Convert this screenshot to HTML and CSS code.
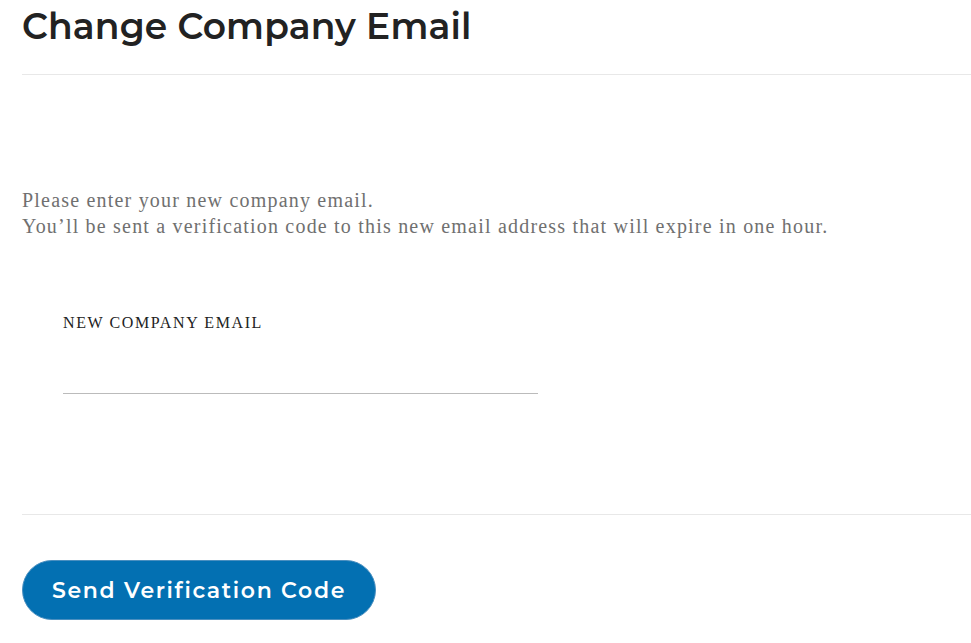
FILE: index.html
```html
<!DOCTYPE html>
<html lang="en">
<head>
<meta charset="UTF-8" />
<meta name="viewport" content="width=device-width, initial-scale=1" />
<title>Change Company Email</title>
<link rel="stylesheet" href="styles.css">
</head>
<body>
  <div class="page">
    <h1 class="title">Change Company Email</h1>

    <div class="body">
      <p class="intro">
        Please enter your new company email.<br>
        You’ll be sent a verification code to this new email address that will expire in one hour.
      </p>

      <form class="email-form" id="emailForm">
        <label class="field-label" for="newEmail">NEW COMPANY EMAIL</label>
        <input class="field-input" type="email" id="newEmail" name="newEmail" />
      </form>
    </div>

    <div class="actions">
      <button class="send-btn" type="submit" form="emailForm">Send Verification Code</button>
    </div>
  </div>
</body>
</html>
```

FILE: styles.css
```css
body, html {
  margin: 0; padding: 0;
  background: #fff;
  overflow: hidden;
}

.page {
  padding-left: 22px;
  width: 949px;
}

.title {
  margin: 0;
  padding: 4px 0 0;
  height: 75px;
  box-sizing: border-box;
  font-family: "Montserrat", "DejaVu Sans", sans-serif;
  font-weight: 600;
  font-size: 36px;
  line-height: 44px;
  letter-spacing: 0.15px;
  color: #222;
  border-bottom: 1px solid #e8e8e8;
}

.body {
  border-bottom: 1px solid #e8e8e8;
  height: 440px;
  box-sizing: border-box;
  padding-top: 112px;
}

.intro {
  margin: 0;
  font-family: "Liberation Serif", serif;
  font-size: 20px;
  line-height: 26px;
  letter-spacing: 1.2px;
  color: #707070;
}

.email-form {
  padding: 75px 0 0 41px;
  display: flex;
  flex-direction: column;
}

.field-label {
  font-family: "Liberation Serif", serif;
  font-size: 16px;
  letter-spacing: 1.6px;
  color: #222;
}

.field-input {
  width: 475px;
  margin-top: 27px;
  border: none;
  border-bottom: 1px solid #bbb;
  padding: 8px 0;
  font-size: 16px;
  outline: none;
}

.actions {
  padding-top: 45px;
}

.send-btn {
  width: 354px;
  height: 60px;
  border: 1px solid #4a8fc0;
  border-radius: 30px;
  background: #0370b2;
  color: #fff;
  font-family: "Montserrat", "DejaVu Sans", sans-serif;
  font-weight: 600;
  font-size: 22px;
  letter-spacing: 1.65px;
  cursor: pointer;
}
```
